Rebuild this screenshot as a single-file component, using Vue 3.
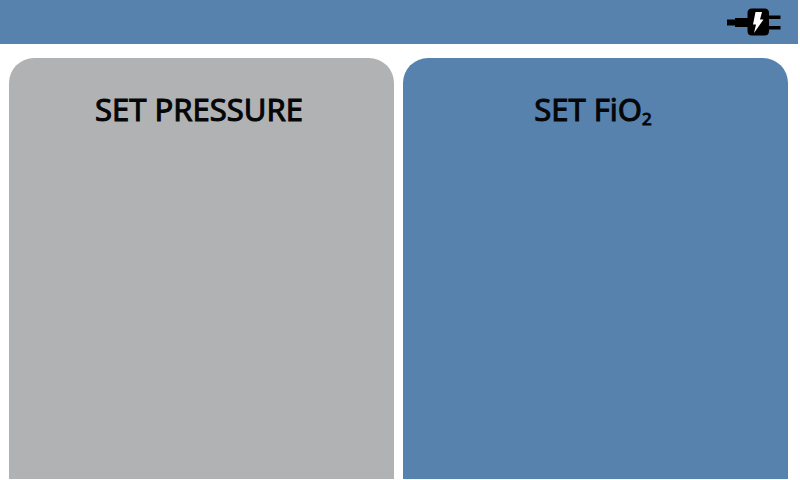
<script setup>
const panels = [
  { id: 'pressure', text: 'SET PRESSURE', sub: '' },
  { id: 'fio2', text: 'SET FiO', sub: '2' },
]
</script>

<template>
  <div class="screen">
    <header class="status-bar">
      <svg class="plug" viewBox="0 0 54 30" role="img" aria-label="Mains power connected">
        <path d="M0 12.500H8V11H20.500V6Q20.500 1.500 25 1.500H37.500Q42 1.500 42 6V8.500H53.500V12H42V19H53.500V22.500H42V24Q42 28.500 37.500 28.500H25Q20.500 28.500 20.500 24V20H8V18.500H0Z" />
        <path class="bolt" d="M28.500 5H35L33 12.500H36.500L27 26L29 17.500H26Z" />
      </svg>
    </header>
    <main class="panels">
      <button v-for="p in panels" :key="p.id" type="button" class="panel" :class="p.id">
        <span class="label">{{ p.text }}<sub v-if="p.sub">{{ p.sub }}</sub></span>
      </button>
    </main>
  </div>
</template>

<style>
body {
  background: #fff;
}
</style>

<style scoped>
.screen {
  box-sizing: border-box;
  min-height: 100vh;
  display: flex;
  flex-direction: column;
  gap: 14px;
  padding-bottom: 1px;
  font-family: "Noto Sans", "Open Sans", sans-serif;
}

.status-bar {
  box-sizing: border-box;
  height: 44px;
  margin-right: 2px;
  padding: 0 17px;
  display: flex;
  align-items: center;
  justify-content: flex-end;
  background: #5882ae;
}

.plug {
  width: 54px;
  height: 30px;
}

.bolt {
  fill: #fff;
}

.panels {
  flex: 1;
  display: grid;
  grid-template-columns: 1fr 1fr;
  gap: 9px;
  padding: 0 12px 0 9px;
}

.panel {
  display: flex;
  justify-content: center;
  align-items: flex-start;
  margin: 0;
  padding: 31px 5px 0 0;
  border: 0;
  border-radius: 25px 25px 0 0;
  color: #050607;
  font-family: inherit;
  font-size: 31px;
  line-height: 40px;
  cursor: pointer;
}

.pressure {
  background: #b1b2b4;
}

.fio2 {
  background: #5882ae;
}

.label {
  -webkit-text-stroke: 1px currentColor;
}

.label sub {
  font-size: 17px;
  line-height: 0;
  vertical-align: -4px;
}
</style>
